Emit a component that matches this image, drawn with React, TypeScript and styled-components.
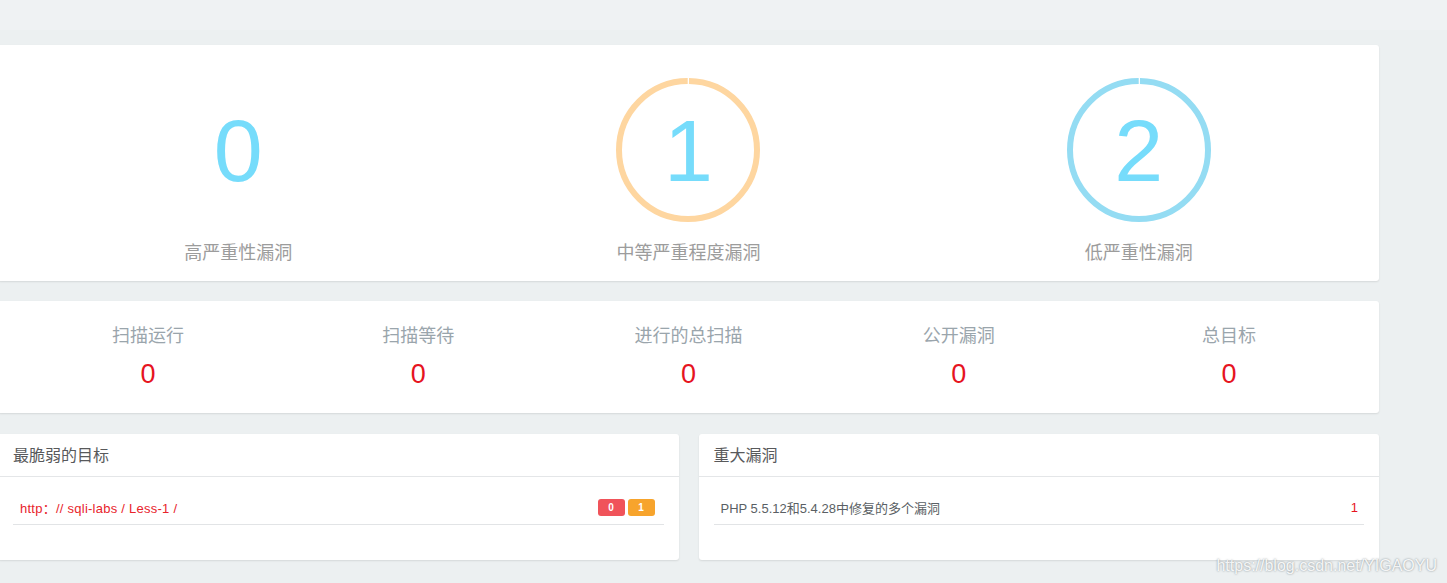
import styled, { createGlobalStyle } from 'styled-components';

const GlobalStyle = createGlobalStyle`
  html, body {
    margin: 0;
    padding: 0;
    background: #ecf0f1;
    font-family: "Liberation Sans", "Noto Sans CJK SC", sans-serif;
  }
`;

type Severity = {
  label: string;
  count: number;
  ring?: string;
};

const severities: Severity[] = [
  { label: '高严重性漏洞', count: 0 },
  { label: '中等严重程度漏洞', count: 1, ring: '#fed6a0' },
  { label: '低严重性漏洞', count: 2, ring: '#94dcf3' },
];

const stats = [
  { label: '扫描运行', value: 0 },
  { label: '扫描等待', value: 0 },
  { label: '进行的总扫描', value: 0 },
  { label: '公开漏洞', value: 0 },
  { label: '总目标', value: 0 },
];

function Donut({ color }: { color: string }) {
  const r = 69;
  const c = 2 * Math.PI * r;
  const gap = 2;
  return (
    <RingSvg width="144" height="144" viewBox="0 0 144 144">
      <circle
        cx="72"
        cy="72"
        r={r}
        fill="none"
        stroke={color}
        strokeWidth="6"
        strokeDasharray={`${c - gap} ${gap}`}
        strokeDashoffset={-gap / 2}
        transform="rotate(-90 72 72)"
      />
    </RingSvg>
  );
}

export default function App() {
  return (
    <>
      <GlobalStyle />
      <Page>
        <TopStrip />
        <Content>
          <SeverityCard>
            {severities.map((s) => (
              <SeverityCol key={s.label}>
                <Figure>
                  {s.ring && <Donut color={s.ring} />}
                  <BigNumber>{s.count}</BigNumber>
                </Figure>
                <SeverityLabel>{s.label}</SeverityLabel>
              </SeverityCol>
            ))}
          </SeverityCard>

          <StatsCard>
            {stats.map((s) => (
              <StatCol key={s.label}>
                <StatLabel>{s.label}</StatLabel>
                <StatValue>{s.value}</StatValue>
              </StatCol>
            ))}
          </StatsCard>

          <BottomRow>
            <Panel>
              <PanelHeader>最脆弱的目标</PanelHeader>
              <PanelBody>
                <ListItem>
                  <TargetLink>http：// sqli-labs / Less-1 /</TargetLink>
                  <Badges>
                    <Badge $color="#f0535a">0</Badge>
                    <Badge $color="#f7a42c">1</Badge>
                  </Badges>
                </ListItem>
              </PanelBody>
            </Panel>

            <Panel>
              <PanelHeader>重大漏洞</PanelHeader>
              <PanelBody>
                <ListItem>
                  <VulnName>PHP 5.5.12和5.4.28中修复的多个漏洞</VulnName>
                  <VulnCount>1</VulnCount>
                </ListItem>
              </PanelBody>
            </Panel>
          </BottomRow>
        </Content>
        <Watermark>https://blog.csdn.net/YIGAOYU</Watermark>
      </Page>
    </>
  );
}

const Page = styled.div`
  position: relative;
  width: 1447px;
  height: 583px;
  overflow: hidden;
  background: #ecf0f1;
`;

const TopStrip = styled.div`
  height: 30px;
  background: #eff2f3;
`;

const Content = styled.div`
  width: 1381px;
  margin: 15px 0 0 -2px;
  display: flex;
  flex-direction: column;
  gap: 20px;
`;

const Card = styled.div`
  background: #fff;
  border-radius: 3px;
  box-shadow: 0 1px 2px rgba(0, 0, 0, 0.1);
`;

const SeverityCard = styled(Card)`
  display: grid;
  grid-template-columns: repeat(3, 1fr);
  padding: 33px 15px 16px;
`;

const SeverityCol = styled.div`
  display: flex;
  flex-direction: column;
  align-items: center;
`;

const Figure = styled.div`
  position: relative;
  width: 144px;
  height: 144px;
  display: flex;
  align-items: center;
  justify-content: center;
`;

const RingSvg = styled.svg`
  position: absolute;
  inset: 0;
`;

const BigNumber = styled.span`
  position: relative;
  font-family: "Liberation Sans", Arial, sans-serif;
  font-size: 88px;
  line-height: 1;
  color: #76dcfb;
  margin-top: 2px;
`;

const SeverityLabel = styled.div`
  margin-top: 17px;
  padding-bottom: 2px;
  font-family: "Noto Sans CJK SC", sans-serif;
  font-size: 18px;
  line-height: 24px;
  color: #9c9c9c;
`;

const StatsCard = styled(Card)`
  display: grid;
  grid-template-columns: repeat(5, 1fr);
  padding: 20px 15px 22px;
`;

const StatCol = styled.div`
  display: flex;
  flex-direction: column;
  align-items: center;
`;

const StatLabel = styled.div`
  font-family: "Noto Sans CJK SC", sans-serif;
  font-size: 18px;
  line-height: 26px;
  color: #9aa5ac;
`;

const StatValue = styled.div`
  margin-top: 10px;
  font-family: "Liberation Sans", Arial, sans-serif;
  font-size: 27px;
  line-height: 34px;
  color: #e6141f;
`;

const BottomRow = styled.div`
  display: grid;
  grid-template-columns: 1fr 1fr;
  gap: 20px;
  margin-top: 1px;
`;

const Panel = styled(Card)`
  display: flex;
  flex-direction: column;
`;

const PanelHeader = styled.div`
  height: 39px;
  padding: 0 15px 3px;
  display: flex;
  align-items: center;
  border-bottom: 1px solid #e4e6e8;
  font-family: "Noto Sans CJK SC", sans-serif;
  font-size: 16px;
  color: #58595b;
`;

const PanelBody = styled.div`
  padding: 14px 15px 35px;
`;

const ListItem = styled.div`
  height: 33px;
  padding: 0 9px 0 7px;
  display: flex;
  align-items: center;
  justify-content: space-between;
  border-bottom: 1px solid #e2e4e6;
`;

const TargetLink = styled.span`
  font-family: "Liberation Sans", "Noto Sans CJK SC", sans-serif;
  font-size: 13px;
  letter-spacing: 0.25px;
  color: #e8232b;
`;

const Badges = styled.div`
  display: flex;
  gap: 3px;
`;

const Badge = styled.span<{ $color: string }>`
  width: 27px;
  height: 17px;
  border-radius: 3px;
  background: ${(p) => p.$color};
  color: #fff;
  font-family: "Liberation Sans", Arial, sans-serif;
  font-size: 10px;
  font-weight: 700;
  display: flex;
  align-items: center;
  justify-content: center;
`;

const VulnName = styled.span`
  font-family: "Liberation Sans", "Noto Sans CJK SC", sans-serif;
  font-size: 13px;
  color: #5a5f64;
`;

const VulnCount = styled.span`
  font-family: "Liberation Sans", Arial, sans-serif;
  font-size: 13px;
  color: #e6141f;
  margin-right: -3px;
`;

const Watermark = styled.div`
  position: absolute;
  right: 10px;
  bottom: 8px;
  font-family: "Liberation Sans", Arial, sans-serif;
  font-size: 16px;
  color: rgba(255, 255, 255, 0.9);
  text-shadow: 0 0 2px rgba(110, 120, 125, 0.9);
`;
